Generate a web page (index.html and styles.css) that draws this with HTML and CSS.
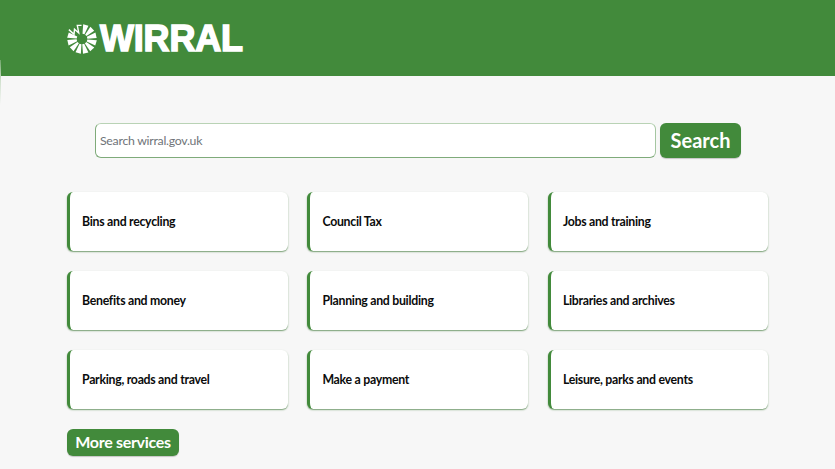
FILE: index.html
```html
<!DOCTYPE html>
<html lang="en">
<head>
<meta charset="utf-8">
<title>Wirral Council</title>
<link rel="stylesheet" href="styles.css">
</head>
<body>
<header class="site-header">
  <a class="logo" href="#">
    <svg class="logo-mark" viewBox="-16 -16 32 32" aria-hidden="true">
      <defs>
        <path id="ray" d="M-0.9 -5.6 L-2.9 -15.6 L3 -15.4 L1.2 -5.6Z"/>
      </defs>
      <g class="rays">
        <use href="#ray" transform="rotate(15)"/>
        <use href="#ray" transform="rotate(45)"/>
        <use href="#ray" transform="rotate(75)"/>
        <use href="#ray" transform="rotate(105)"/>
        <use href="#ray" transform="rotate(135)"/>
        <use href="#ray" transform="rotate(165)"/>
        <use href="#ray" transform="rotate(195)"/>
        <use href="#ray" transform="rotate(225)"/>
        <use href="#ray" transform="rotate(255)"/>
        <use href="#ray" transform="rotate(285)"/>
      </g>
      <path class="mark-w" d="M-14 -10 L-8.5 -5 L-8 -10.5 L-3.5 -6.5 L-5 -14.5 L-.5 -14.5"/>
    </svg>
    <span class="logo-text">WIRRAL</span>
  </a>
</header>
<main class="content">
  <form class="search">
    <input class="search-input" type="text" placeholder="Search wirral.gov.uk">
    <button class="search-button" type="button">Search</button>
  </form>
  <nav class="cards">
    <a class="card" href="#">Bins and recycling</a>
    <a class="card" href="#">Council Tax</a>
    <a class="card" href="#">Jobs and training</a>
    <a class="card" href="#">Benefits and money</a>
    <a class="card" href="#">Planning and building</a>
    <a class="card" href="#">Libraries and archives</a>
    <a class="card" href="#">Parking, roads and travel</a>
    <a class="card" href="#">Make a payment</a>
    <a class="card" href="#">Leisure, parks and events</a>
  </nav>
  <a class="more" href="#">More services</a>
</main>
</body>
</html>
```
FILE: styles.css
```css
* { box-sizing: border-box; }
html, body { margin: 0; height: 100%; overflow: hidden; }
body {
  background: #f7f7f7;
  font-family: Lato, "Liberation Sans", sans-serif;
  color: #0b0c0c;
}
a { text-decoration: none; color: inherit; }

.site-header {
  position: relative;
  height: 76px;
  background: #428a3b;
  padding: 0 0 0 67px;
  display: flex;
  align-items: center;
}
.site-header::after {
  content: "";
  position: absolute;
  left: 0;
  top: 60px;
  width: 1px;
  height: 45px;
  background: linear-gradient(#6fa669, #cfe0cc 45%, #f7f7f7);
}
.logo { display: flex; align-items: center; gap: 3px; color: #fff; margin-top: 1px; }
.logo-mark { width: 30px; height: 30px; display: block; }
.rays { fill: #fff; }
.mark-w { fill: none; stroke: #fff; stroke-width: 1.5; stroke-linejoin: miter; }
.logo-text {
  font-family: "Liberation Sans", Arial, sans-serif;
  font-weight: 700;
  font-size: 36px;
  line-height: 1;
  letter-spacing: -0.2px;
  -webkit-text-stroke: 1.5px #fff;
}

.content { padding: 47px 67px 0; }

.search { display: flex; gap: 4px; margin: 0 0 34px 28px; height: 35px; }
.search-input {
  width: 561px;
  height: 35px;
  padding: 0 4px;
  border: 1px solid #7fab7a;
  border-top-color: #b9d3b5;
  border-right-color: #a5c6a1;
  border-radius: 6px;
  background: #fff;
  font-family: inherit;
  font-size: 12.3px;
  letter-spacing: -0.27px;
  outline: none;
}
.search-input::placeholder { color: #6f7479; opacity: 1; }
.search-button {
  width: 81px;
  height: 35px;
  border: 0;
  border-radius: 6px;
  background: #428a3b;
  box-shadow: 0 1px 1px rgba(0,0,0,.2);
  color: #fff;
  font-family: inherit;
  font-size: 20px;
  font-weight: 700;
  padding: 0 0 2px;
}

.cards {
  display: grid;
  grid-template-columns: repeat(3, 220.55px);
  column-gap: 19.9px;
  row-gap: 20px;
}
.card {
  height: 59px;
  display: flex;
  align-items: center;
  padding: 0 0 1px 12px;
  background: #fff;
  border-left: 3px solid #428a3b;
  border-radius: 6px;
  box-shadow: 0 1px 1.5px rgba(50,110,45,.65);
  font-size: 12.3px;
  letter-spacing: -0.28px;
  font-weight: 700;
}

.more {
  display: inline-block;
  margin-top: 20px;
  width: 112px;
  height: 27px;
  line-height: 25px;
  text-align: center;
  border-radius: 6px;
  background: #428a3b;
  box-shadow: 0 1px 1px rgba(0,0,0,.2);
  color: #fff;
  font-size: 16px;
  letter-spacing: -0.3px;
  font-weight: 700;
}
```
